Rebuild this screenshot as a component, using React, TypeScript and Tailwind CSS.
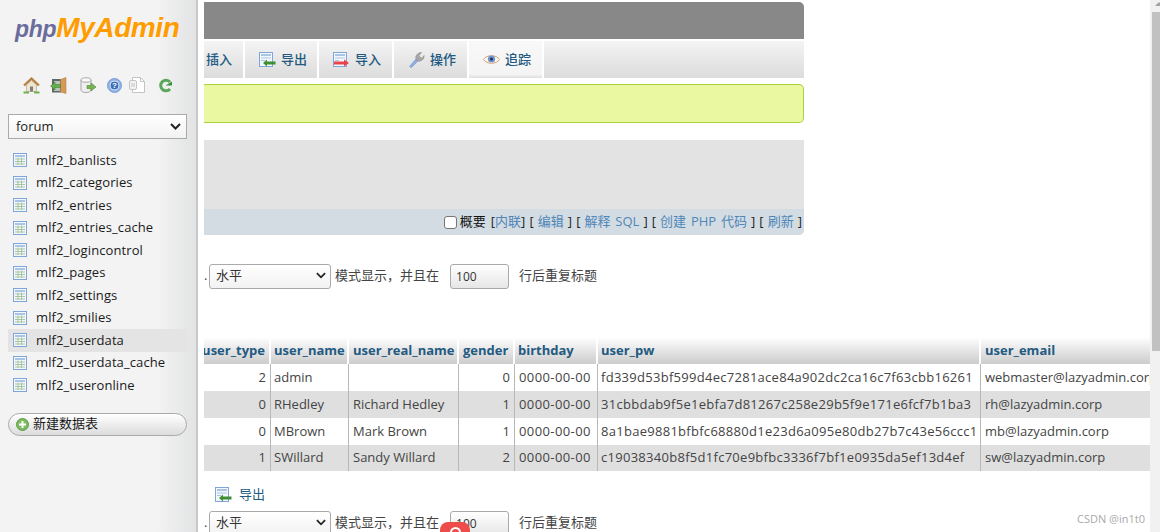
const font = { fontFamily: '"Open Sans", "Noto Sans CJK SC", sans-serif' };

const tables = [
  'mlf2_banlists',
  'mlf2_categories',
  'mlf2_entries',
  'mlf2_entries_cache',
  'mlf2_logincontrol',
  'mlf2_pages',
  'mlf2_settings',
  'mlf2_smilies',
  'mlf2_userdata',
  'mlf2_userdata_cache',
  'mlf2_useronline',
];

const rows = [
  ['2', 'admin', '', '0', '0000-00-00', 'fd339d53bf599d4ec7281ace84a902dc2ca16c7f63cbb16261', 'webmaster@lazyadmin.corp'],
  ['0', 'RHedley', 'Richard Hedley', '1', '0000-00-00', '31cbbdab9f5e1ebfa7d81267c258e29b5f9e171e6fcf7b1ba3', 'rh@lazyadmin.corp'],
  ['0', 'MBrown', 'Mark Brown', '1', '0000-00-00', '8a1bae9881bfbfc68880d1e23d6a095e80db27b7c43e56ccc1', 'mb@lazyadmin.corp'],
  ['1', 'SWillard', 'Sandy Willard', '2', '0000-00-00', 'c19038340b8f5d1fc70e9bfbc3336f7bf1e0935da5ef13d4ef', 'sw@lazyadmin.corp'],
];

const heads = ['user_type', 'user_name', 'user_real_name', 'gender', 'birthday', 'user_pw', 'user_email'];
const widths = [67, 78, 110, 56, 83, 383, 172];

function TableIcon() {
  return (
    <svg width="16" height="16" viewBox="0 0 16 16" className="shrink-0">
      <rect x="0.5" y="1.5" width="13" height="13" fill="#f4f8fc" stroke="#7fa6d8" />
      <rect x="2" y="3" width="10" height="2" fill="#a9c4e4" />
      <path d="M2 7h10M2 9.500h10M2 12h10M5 5.500v7.500M8.500 5.500v7.500" stroke="#a7c5a0" strokeWidth="1" />
    </svg>
  );
}

function ArrowDocIcon({ color, dir }: { color: string; dir: 'in' | 'out' }) {
  return (
    <svg width="17" height="16" viewBox="0 0 17 16" className="shrink-0">
      <rect x="0.5" y="0.5" width="13" height="14" fill="#f4f8fc" stroke="#7fa6d8" />
      <rect x="2" y="2" width="10" height="2" fill="#a9c4e4" />
      <path d="M2 6h10M2 8.500h4" stroke="#a9c4e4" />
      {dir === 'out' ? (
        <path d="M16.500 9.500H8V7.500L4 11l4 3.500v-2h8.500z" fill={color} />
      ) : (
        <path d="M1 9.500h10V7.500l5 3.500-5 3.500v-2H1z" fill={color} />
      )}
    </svg>
  );
}

function SideIcons() {
  return (
    <div className="flex items-center h-4 ml-[23px] mt-[45px]">
      {/* home */}
      <svg width="17" height="17" viewBox="0 0 17 17" className="shrink-0">
        <path d="M3.500 8 8.500 3.500 13.500 8v6.500h-10z" fill="#efe6d2" stroke="#a89a80" strokeWidth="0.6" />
        <path d="M1 8.500 8.500 1.500 16 8.500" fill="none" stroke="#b5803f" strokeWidth="2.200" />
        <rect x="7" y="9.500" width="3" height="5" fill="#7f7f7f" />
        <path d="M0.500 14.500h5.500v2H.5zM11 14.500h5.500v2H11z" fill="#6fb04e" />
      </svg>
      {/* exit */}
      <svg width="17" height="17" viewBox="0 0 17 17" className="shrink-0 ml-[10px]">
        <rect x="2" y="2" width="9" height="13.500" fill="#5f6a64" />
        <rect x="4" y="4" width="6" height="10" fill="#b9c2bb" />
        <path d="M10.500 2.500 16 .5v16l-5.500-1.500z" fill="#d69a56" stroke="#a9743a" strokeWidth="0.5" />
        <path d="M0.500 9 5 5v2.500h5.500v3H5V13z" fill="#63b04a" stroke="#3a7d2c" strokeWidth="0.500" />
      </svg>
      {/* db go */}
      <svg width="16" height="17" viewBox="0 0 16 17" className="shrink-0 ml-[13px]">
        <path d="M1 3v10c0 1.500 2.500 2.500 5 2.500S11 14.500 11 13V3z" fill="#efefef" stroke="#a8a8a8" />
        <ellipse cx="6" cy="3" rx="5" ry="2.200" fill="#fafafa" stroke="#a8a8a8" />
        <path d="M7 8.500h4V6l5 4-5 4v-2.500H7z" fill="#79b454" stroke="#4b8a31" strokeWidth="0.600" />
      </svg>
      {/* help */}
      <svg width="15" height="15" viewBox="0 0 15 15" className="shrink-0 ml-[11px]">
        <circle cx="7.500" cy="7.500" r="7" fill="#8eb2e4" stroke="#7c9fd2" />
        <circle cx="7.500" cy="7.500" r="4.800" fill="#fff" />
        <circle cx="7.500" cy="7.500" r="4" fill="#3b6fb6" />
        <text x="7.500" y="10.300" textAnchor="middle" fontSize="8" fontWeight="700" fill="#fff" fontFamily="Liberation Sans">?</text>
      </svg>
      {/* docs */}
      <svg width="16" height="16" viewBox="0 0 16 16" className="shrink-0 ml-[7px]">
        <path d="M3.500 0.500h8l4 4v11h-12z" fill="#fff" stroke="#c4c4c4" />
        <path d="M11.500 .5v4h4" fill="none" stroke="#c4c4c4" />
        <rect x="0.500" y="3.500" width="7" height="9" rx="1.500" fill="#f3f3f3" stroke="#c4c4c4" />
        <path d="M3 6v4M5 6v4" stroke="#c4c4c4" />
      </svg>
      {/* reload */}
      <svg width="13" height="15" viewBox="0 0 13 15" className="shrink-0 ml-[14px]">
        <path d="M11 4A5.300 5.300 0 1 0 11 11" fill="none" stroke="#5aa65a" strokeWidth="3" />
        <path d="M6.500 7.500H13V3.500z" fill="#3c8f3c" />
      </svg>
    </div>
  );
}

function Logo() {
  return (
    <div className="ml-[15px] pt-[14px] h-[32px] flex items-baseline italic font-bold leading-none" style={{ fontFamily: '"Liberation Sans", sans-serif' }}>
      <span className="text-[23px] text-[#6c6c9c] tracking-[-0.3px]">php</span>
      <span className="text-[28px] text-[#ff9c00] tracking-[-0.4px]">MyAdmin</span>
    </div>
  );
}

function Sidebar() {
  return (
    <div className="w-[198px] h-[532px] shrink-0 bg-[linear-gradient(to_right,#f3f3f3_0%,#f3f3f3_80%,#e2e3e4_100%)] border-r-2 border-[#c8c8c8] overflow-hidden">
      <Logo />
      <SideIcons />
      <div className="ml-2 mt-[21px] w-[179px] h-[25px] border border-[#aaaaaa] bg-[linear-gradient(to_bottom,#ffffff,#f2f2f2)] flex items-center justify-between pl-[7px] pr-[5px] text-[13px] text-[#222]">
        <span>forum</span>
        <svg width="11" height="7" viewBox="0 0 11 7"><path d="M1 1l4.500 4.500L10 1" fill="none" stroke="#222" strokeWidth="2" /></svg>
      </div>
      <div className="mt-[10px] ml-2 w-[179px]">
        {tables.map((t) => (
          <div
            key={t}
            className={`flex items-center h-[22.5px] pl-[5px] gap-[7px] text-[13px] tracking-[0.1px] text-[#1a1a1a] ${t === 'mlf2_userdata' ? 'bg-[#e4e4e4]' : ''}`}
          >
            <TableIcon />
            <span>{t}</span>
          </div>
        ))}
      </div>
      <div className="mt-4 ml-2 w-[179px] h-[23px] rounded-full border border-[#aaaaaa] bg-[linear-gradient(to_bottom,#ffffff,#dcdcdc)] flex items-center pl-[7px] gap-[4px] text-[13px] text-[#1a1a1a]">
        <svg width="13" height="13" viewBox="0 0 13 13" className="shrink-0">
          <circle cx="6.500" cy="6.500" r="6" fill="#7dbb60" stroke="#5f9a48" />
          <path d="M6.500 3v7M3 6.500h7" stroke="#fff" strokeWidth="2" />
        </svg>
        <span>新建数据表</span>
      </div>
    </div>
  );
}

function Tab({ icon, label, width, active }: { icon: React.ReactNode; label: string; width: string; active?: boolean }) {
  return (
    <div
      className={`${width} h-[37px] flex items-center gap-[5px] pl-[14px] border-r-2 border-white text-[13px] font-medium text-[#235a81] ${active ? 'bg-[linear-gradient(to_bottom,#f8f8f8,#f4f4f4_90%,#dddddd)]' : 'bg-[linear-gradient(to_bottom,#f4f4f4,#dcdcdc)]'}`}
    >
      {icon}
      <span>{label}</span>
    </div>
  );
}

function RepeatRow() {
  return (
    <div className="flex items-center h-[25px] text-[13px] text-[#444]">
      <span className="w-[5px] pb-[2px]">.</span>
      <div className="w-[122px] h-[25px] pb-[2px] rounded-[3px] border border-[#aaaaaa] bg-[linear-gradient(to_bottom,#ffffff,#f2f2f2)] flex items-center justify-between pl-[6px] pr-[4px] text-[#333]">
        <span>水平</span>
        <svg width="10" height="7" viewBox="0 0 11 7"><path d="M1 1l4.500 4.500L10 1" fill="none" stroke="#222" strokeWidth="2" /></svg>
      </div>
      <span className="ml-[4px] pb-[2px]">模式显示，并且在</span>
      <div className="w-[59px] h-[25px] ml-[11px] rounded-[3px] border border-[#aaaaaa] bg-[linear-gradient(to_bottom,#ffffff,#e6e6e6)] flex items-center pl-[5px] text-[#333] text-[12px]">100</div>
      <span className="ml-[10px] pb-[2px]">行后重复标题</span>
    </div>
  );
}

function DataTable() {
  return (
    <table className="border-separate border-spacing-0 table-fixed text-[13px] text-[#444]" style={{ width: widths.reduce((a, b) => a + b, 0) }}>
      <colgroup>
        {widths.map((w, i) => (
          <col key={i} style={{ width: w }} />
        ))}
      </colgroup>
      <thead>
        <tr className="h-[27px]">
          {heads.map((h, i) => (
            <th
              key={h}
              className={`bg-[linear-gradient(to_bottom,#ffffff,#cccccc)] border-r-2 border-white text-left font-bold text-[#235a81] whitespace-nowrap overflow-hidden ${i === 0 ? 'pr-[4px]' : i === 1 || i === 4 || i === 5 ? 'px-[3px]' : 'px-[4px]'}`}
            >
              {i === 0 ? <div className="flex justify-end">{h}</div> : h}
            </th>
          ))}
        </tr>
      </thead>
      <tbody>
        {rows.map((r, ri) => (
          <tr key={ri} className={`${ri === 3 ? 'h-[26px]' : 'h-[27px]'} ${ri % 2 === 0 ? 'bg-white' : 'bg-[#dfdfdf]'}`}>
            {r.map((c, i) => (
              <td
                key={i}
                className={`border-r border-[#b8b8b8] whitespace-nowrap overflow-hidden ${i === 5 ? 'pl-[3px] pr-[4px] tracking-[0.28px]' : i === 1 ? 'pl-[3px] pr-[4px]' : 'px-[4px]'} ${i === 4 ? 'tracking-[0.4px]' : ''} ${i === 0 || i === 3 ? 'text-right' : ''}`}
              >
                {c}
              </td>
            ))}
          </tr>
        ))}
      </tbody>
    </table>
  );
}

function Bracket({ children }: { children: React.ReactNode }) {
  return <span className="text-[#4f86b8] [word-spacing:1.400px]">{children}</span>;
}

function Main() {
  return (
    <div className="relative flex-1 min-w-0 h-[532px] overflow-hidden pl-[6px] bg-white">
      <div className="w-[600px] mt-[2px] h-[37px] rounded-tr-[5px] bg-[#888888]" />
      <div className="w-[600px] mt-[2px] h-[37px] flex bg-[linear-gradient(to_bottom,#f4f4f4,#dcdcdc)]">
        <div className="h-[37px] w-[41px] flex items-center justify-end pr-[11px] overflow-hidden border-r-2 border-white text-[13px] font-medium text-[#235a81] whitespace-nowrap">插入</div>
        <Tab width="w-[74px]" icon={<ArrowDocIcon color="#3e8f35" dir="out" />} label="导出" />
        <Tab width="w-[75px]" icon={<ArrowDocIcon color="#e8434a" dir="in" />} label="导入" />
        <Tab
          width="w-[75px]"
          icon={
            <svg width="17" height="17" viewBox="0 0 17 17" className="shrink-0">
              <path d="M1.500 15.500 8 8l2 2-6.500 6.500z" fill="#8fb0de" stroke="#6f8fbd" strokeWidth="0.600" />
              <path d="M8 8c-1-3 1.500-6.500 5.500-6.500L11 4.500l1 2 2.500.5L16 4.500c.5 3.500-3 6.500-6 5.500z" fill="#a8a8a8" stroke="#8a8a8a" strokeWidth="0.600" />
            </svg>
          }
          label="操作"
        />
        <Tab
          width="w-[75px]"
          active
          icon={
            <svg width="17" height="13" viewBox="0 0 17 13" className="shrink-0">
              <path d="M.5 6.500C3 1.500 14 1.500 16.500 6.500 14 11.500 3 11.500.5 6.500z" fill="#fdf6ea" stroke="#d9a27a" />
              <circle cx="8.500" cy="6" r="3.600" fill="#6f94d4" />
              <circle cx="8.500" cy="6" r="1.500" fill="#1f2f55" />
            </svg>
          }
          label="追踪"
        />
      </div>
      <div className="w-[600px] mt-[6px] h-[39px] rounded-r-[5px] border-y border-r border-[#a6d33c] bg-[#e9f8a1]" />
      <div className="w-[600px] mt-[17px] h-[95px] rounded-br-[5px] bg-[#e3e3e3] flex flex-col justify-end">
        <div className="h-[26px] rounded-br-[5px] bg-[#d3dce3] flex items-center justify-end pr-[2px] text-[13px] text-[#222] whitespace-nowrap [word-spacing:0.700px]">
          <span className="w-[13px] h-[13px] rounded-[3px] border border-[#767676] bg-white mr-[3px]" />
          <span className="mr-[5px] text-[#111]">概要</span>
          <span>
            [<Bracket>内联</Bracket>] [ <Bracket>编辑</Bracket> ] [ <Bracket>解释 SQL</Bracket> ] [ <Bracket>创建 PHP 代码</Bracket> ] [ <Bracket>刷新</Bracket> ]
          </span>
        </div>
      </div>
      <div className="mt-[29px]">
        <RepeatRow />
      </div>
      <div className="mt-[48px] w-[946px] overflow-hidden">
        <DataTable />
      </div>
      <div className="mt-[16px] ml-[11px] h-[16px] flex items-center gap-[7px] text-[13px] text-[#235a81]">
        <ArrowDocIcon color="#3e8f35" dir="out" />
        <span>导出</span>
      </div>
      <div className="mt-[8px]">
        <RepeatRow />
      </div>
      {/* csdn watermark and the red float badge */}
      <div className="absolute left-[242px] top-[522px] w-[30px] h-[12px] rounded-t-[8px] bg-[#ee4b4b] overflow-hidden">
        <div className="mx-auto mt-[5px] w-[11px] h-[11px] rounded-full border-2 border-white" />
      </div>
      <div className="absolute right-[15px] top-[511px] text-[11px] text-[#aaaaaa]">CSDN @in1t0</div>
      {/* page scrollbar */}
      <div className="absolute right-0 top-0 w-[10px] h-[532px] bg-[#f1f1f1] pl-[2px] pt-[12px]">
        <div className="absolute left-[5px] top-[2px] w-0 h-0 border-x-[4px] border-b-[4px] border-x-transparent border-b-[#a3a3a3]" />
        <div className="h-[339px] bg-[#c1c1c1]" />
      </div>
    </div>
  );
}

export default function App() {
  return (
    <div className="flex w-[1160px] h-[532px] overflow-hidden bg-white" style={font}>
      <Sidebar />
      <Main />
    </div>
  );
}
